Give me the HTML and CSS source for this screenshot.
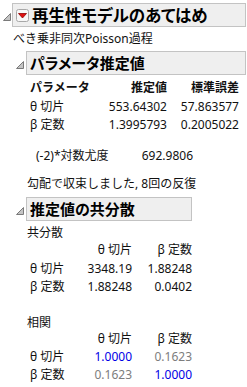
FILE: index.html
```html
<!DOCTYPE html>
<html lang="ja">
<head>
<meta charset="utf-8">
<link rel="stylesheet" href="styles.css">
</head>
<body>
<div class="outline">
  <div class="ohead">
    <svg class="disc" width="8" height="8" viewBox="0 0 8 8"><polygon points="7.5,0.5 7.5,7.5 0.5,7.5" fill="#c4c4c4" stroke="#7a7a7a" stroke-width="1"/></svg>
    <div class="obox">
      <span class="redbtn"><svg width="13" height="13" viewBox="0 0 13 13"><rect x="0.5" y="0.5" width="12" height="12" rx="2" fill="#f7f7f7" stroke="#a8a8a8"/><polygon points="2.5,4.5 10.5,4.5 6.5,9" fill="#e01010" stroke="#900000" stroke-width="0.8" stroke-linejoin="round"/></svg></span>
      <span class="otitle">再生性モデルのあてはめ</span>
    </div>
  </div>
  <div class="obody outer-body">
    <div class="sub">べき乗非同次Poisson過程</div>

    <div class="outline inner">
      <div class="ohead">
        <svg class="disc" width="8" height="8" viewBox="0 0 8 8"><polygon points="7.5,0.5 7.5,7.5 0.5,7.5" fill="#c4c4c4" stroke="#7a7a7a" stroke-width="1"/></svg>
        <div class="obox"><span class="otitle">パラメータ推定値</span></div>
      </div>
      <div class="obody">
        <div class="ptable">
          <div class="c lbl bold">パラメータ</div><div class="c num bold">推定値</div><div class="c num bold">標準誤差</div>
          <div class="c lbl">θ 切片</div><div class="c num">553.64302</div><div class="c num">57.863577</div>
          <div class="c lbl">β 定数</div><div class="c num">1.3995793</div><div class="c num">0.2005022</div>
        </div>
        <div class="lltable">
          <div class="c">(-2)*対数尤度</div><div class="c num">692.9806</div>
        </div>
        <div class="msg">勾配で収束しました, 8回の反復</div>
      </div>
    </div>

    <div class="outline inner">
      <div class="ohead">
        <svg class="disc" width="8" height="8" viewBox="0 0 8 8"><polygon points="7.5,0.5 7.5,7.5 0.5,7.5" fill="#c4c4c4" stroke="#7a7a7a" stroke-width="1"/></svg>
        <div class="obox"><span class="otitle">推定値の共分散</span></div>
      </div>
      <div class="obody">
        <div class="cap">共分散</div>
        <div class="ctable cov">
          <div class="c"></div><div class="c num">θ 切片</div><div class="c num">β 定数</div>
          <div class="c lbl">θ 切片</div><div class="c num">3348.19</div><div class="c num">1.88248</div>
          <div class="c lbl">β 定数</div><div class="c num">1.88248</div><div class="c num">0.0402</div>
        </div>
        <div class="cap cap2">相関</div>
        <div class="ctable corr">
          <div class="c"></div><div class="c num">θ 切片</div><div class="c num">β 定数</div>
          <div class="c lbl">θ 切片</div><div class="c num blue">1.0000</div><div class="c num gray">0.1623</div>
          <div class="c lbl">β 定数</div><div class="c num gray">0.1623</div><div class="c num blue">1.0000</div>
        </div>
      </div>
    </div>
  </div>
</div>
</body>
</html>
```

FILE: styles.css
```css
html, body {
  margin: 0;
  padding: 0;
  background: #ffffff;
}
body {
  font-family: "Noto Sans", "Noto Sans CJK JP", sans-serif;
  font-size: 12px;
  color: #111111;
  width: 247px;
  height: 387px;
  overflow: hidden;
  padding-top: 3px;
  box-sizing: border-box;
}
.outline {
  display: flex;
  flex-direction: column;
  width: fit-content;
}
.ohead {
  display: flex;
  align-items: center;
}
.disc {
  flex: none;
  margin-left: 3px;
  margin-right: 1px;
  margin-top: 3px;
}
.inner > .ohead .disc {
  margin-right: 2px;
}
.obox {
  flex: 1;
  height: 22px;
  display: flex;
  align-items: center;
  gap: 3px;
  padding: 0 2px 0 3px;
  border: 1px solid #c3c3c3;
  background: #efefef;
}
.redbtn {
  display: flex;
  flex: none;
}
.redbtn svg {
  display: block;
}
.otitle {
  font-family: "Noto Sans CJK JP", sans-serif;
  font-weight: 700;
  font-size: 16.5px;
  line-height: 22px;
  font-feature-settings: "palt";
  color: #000000;
  white-space: nowrap;
}
.inner .otitle {
  font-size: 15px;
}
.outer-body {
  padding-left: 13px;
  display: flex;
  flex-direction: column;
  align-items: flex-start;
}
.sub {
  margin-top: 4px;
  line-height: 16px;
  white-space: nowrap;
}
.inner {
  margin-top: 4px;
}
.inner > .obody {
  padding-left: 14px;
}
.c {
  white-space: nowrap;
}
.num {
  text-align: right;
}
.bold {
  font-weight: 700;
}
.lbl {
  padding-left: 3px;
}
.ptable {
  display: grid;
  grid-template-columns: 78px 62px 72px;
  grid-auto-rows: 18.5px;
  line-height: 18.5px;
  margin-top: 4px;
  margin-right: 7px;
}
.lltable {
  display: grid;
  grid-template-columns: 90px 67px;
  margin-left: 9px;
  margin-top: 12.5px;
  line-height: 18px;
}
.msg {
  margin-top: 10px;
  line-height: 18px;
  white-space: nowrap;
}
.cap {
  margin-top: 4px;
  line-height: 16px;
}
.cap2 {
  margin-top: 18.5px;
  line-height: 15px;
}
.ctable {
  display: grid;
  grid-template-columns: 58px 47px 60px;
}
.cov {
  grid-auto-rows: 18.5px;
  line-height: 18.5px;
}
.corr {
  grid-auto-rows: 18px;
  line-height: 18px;
}
.blue {
  color: #0000e6;
}
.gray {
  color: #7d7d7d;
}
```
